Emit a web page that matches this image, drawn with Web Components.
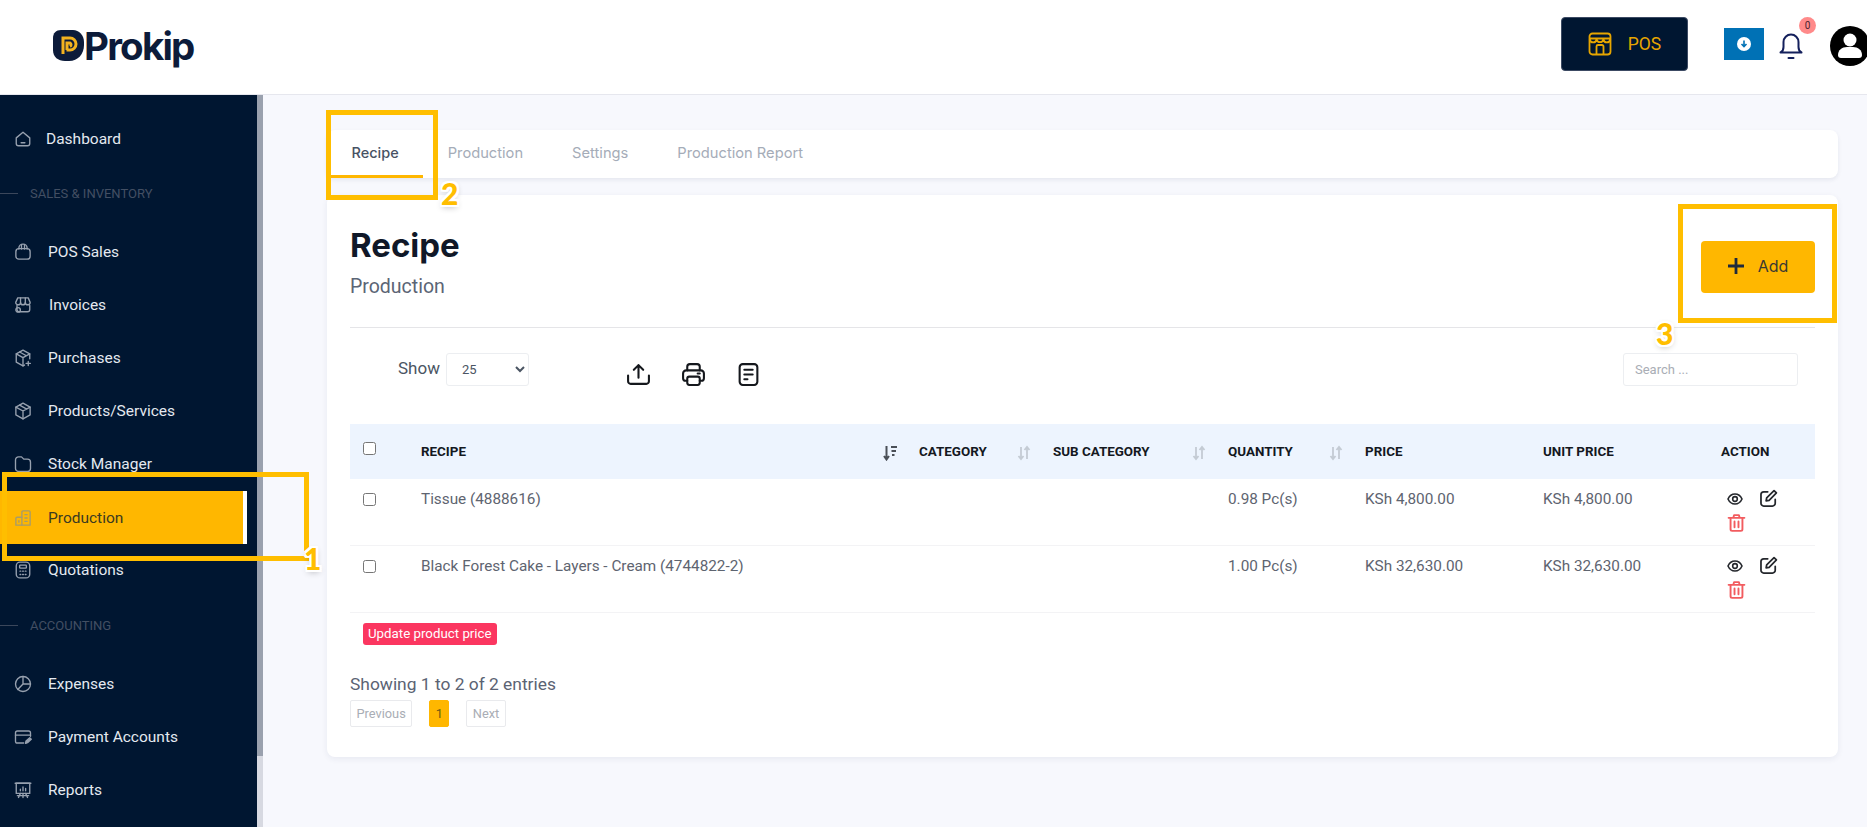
<!DOCTYPE html>
<html>
<head>
<meta charset="utf-8">
<title>Prokip - Recipe</title>
<style>
  html, body { margin: 0; padding: 0; height: 100%; overflow: hidden; }
  body { font-family: Roboto, "Liberation Sans", sans-serif; background: #f7f8fd; }
  #page { position: relative; display: flex; flex-direction: column; width: 1867px; height: 827px; overflow: hidden; }
  #under { display: flex; flex: 1; min-height: 0; }
</style>
</head>
<body>
<div id="page">
  <app-header></app-header>
  <div id="under">
    <side-bar>
      <nav-item icon="home" style="--gap:14px">Dashboard</nav-item>
      <nav-section>SALES &amp; INVENTORY</nav-section>
      <nav-item icon="bag">POS Sales</nav-item>
      <nav-item icon="store" style="--gap:17px">Invoices</nav-item>
      <nav-item icon="boxplus">Purchases</nav-item>
      <nav-item icon="cube">Products/Services</nav-item>
      <nav-item icon="folder">Stock Manager</nav-item>
      <nav-item icon="building" active>Production</nav-item>
      <nav-item icon="calc">Quotations</nav-item>
      <nav-section style="height:61px">ACCOUNTING</nav-section>
      <nav-item icon="pie">Expenses</nav-item>
      <nav-item icon="card">Payment Accounts</nav-item>
      <nav-item icon="board">Reports</nav-item>
    </side-bar>
    <main-area>
      <tab-bar>
        <tab-link active>Recipe</tab-link>
        <tab-link>Production</tab-link>
        <tab-link>Settings</tab-link>
        <tab-link>Production Report</tab-link>
      </tab-bar>
      <recipe-card></recipe-card>
    </main-area>
  </div>
  <note-box n="1" style="left:2px;top:472px;width:307px;height:89px;--nx:297px;--ny:66px"></note-box>
  <note-box n="2" style="left:326px;top:110px;width:112px;height:90px;--nx:110px;--ny:63px"></note-box>
  <note-box n="3" style="left:1678px;top:204px;width:159px;height:119px;--nx:-27px;--ny:109px"></note-box>
</div>

<script>
'use strict';

// sidebar icons, all on a 24 box
const NAV_ICONS = {
  home: '<path d="M3 10.500 12 3l9 7.500V18a3 3 0 0 1-3 3H6a3 3 0 0 1-3-3z"/><path d="M9.500 17h5"/>',
  bag: '<rect x="2.500" y="7.500" width="19" height="14" rx="4"/><path d="M6.500 8V7a5.500 5.500 0 0 1 11 0v1"/><path d="M10 3v5M14 3v5"/>',
  store: '<path d="M5 2.500h14l2.500 6a3.200 3.200 0 0 1-6.400 0 3.200 3.200 0 0 1-6.400 0 3.200 3.200 0 0 1-6.400 0z"/><path d="M8.700 2.500v6M15.100 2.500v6"/><path d="M4 12.500v5.500A3 3 0 0 0 7 21h11a3 3 0 0 0 3-3v-5.500"/><circle cx="5.500" cy="18.500" r="3"/>',
  boxplus: '<path d="M12 1.500 21 6.500v6.500M12 1.500 3 6.500v11l9 5 2-1.100"/><path d="M3 6.500l9 5 9-5M12 11.500v11M7.500 4l9 5"/><path d="M19 16.500v5.500M16.200 19.200h5.600"/>',
  cube: '<path d="M12 1.500 21.500 6.800v10.400L12 22.500l-9.500-5.300V6.800z"/><path d="M2.500 6.800 12 12l9.500-5.200M12 12v10.500M7.500 4.200l9.500 5.300"/>',
  folder: '<path d="M2 6.500A4 4 0 0 1 6 2.500h4l3 3h5a4 4 0 0 1 4 4v8.500a4 4 0 0 1-4 4H6a4 4 0 0 1-4-4z"/>',
  building: '<path d="M10.500 21.500V4a1.500 1.500 0 0 1 1.500-1.500h8A1.500 1.500 0 0 1 21.500 4v17.500z"/><path d="M10.500 11H4a1.500 1.500 0 0 0-1.500 1.500v9h8"/><path d="M14.500 7.500h3M14.500 12h3M14.500 16.500h3M6.500 15.500v2"/>',
  calc: '<rect x="3" y="1.500" width="18" height="21" rx="5"/><rect x="7.500" y="5.500" width="9" height="4" rx="1"/><path d="M8 13.500h1M15 13.500h1M8 18h1M15 18h1M11.500 13.500h1M11.500 18h1"/>',
  pie: '<circle cx="12" cy="12" r="10"/><path d="M12 2v10h10M12 12l-7 7.300"/>',
  card: '<path d="M22 11V6.500A2.500 2.500 0 0 0 19.500 4h-15A2.500 2.500 0 0 0 2 6.500v11A2.500 2.500 0 0 0 4.500 20H13"/><path d="M2 9.500h20"/><path d="m15.500 20.500.5-3 5-4.500 2 2-5 4.500z" fill="currentColor"/>',
  board: '<rect x="3" y="3" width="18" height="13.500"/><path d="M1.500 3h21M8.500 13v-2M12 13V8M15.500 13v-3M8.500 16.500 6 22M15.500 16.500 18 22M12 16.500V22M4.500 19.500h15"/>'
};

class AppHeader extends HTMLElement {
  constructor() {
    super();
    this.attachShadow({mode: 'open'}).innerHTML = `
    <style>
      :host { display: flex; align-items: center; height: 94px; flex: none; background: #fff; border-bottom: 1px solid #e6e7ee; position: relative; }
      .logo { display: flex; align-items: center; margin-left: 53px; margin-top: -2px; }
      .word { font: 700 38.500px/40px Inter, sans-serif; letter-spacing: -1.800px; color: #0c1b3a; margin-top: -1px; }
      .right { margin-left: auto; display: flex; align-items: center; }
      .pos { display: flex; align-items: center; justify-content: center; gap: 16px; width: 127px; height: 54px; box-sizing: border-box; background: #001631; border: 1px solid #3c4a63; border-radius: 4px; color: #e7a600; font: 400 17.500px Roboto, sans-serif; margin-right: 36px; margin-top: -6px; }
      .dl { display: flex; align-items: center; justify-content: center; width: 40px; height: 32px; background: #0071b5; margin-right: 15px; margin-top: -6px; }
      .bell { position: relative; width: 24px; height: 28px; margin-right: 27px; margin-top: -3px; }
      .badge { position: absolute; left: 20px; top: -15px; width: 17px; height: 17px; border-radius: 50%; background: #ff8a8a; color: #4a2530; font: 400 10px/17px Roboto, sans-serif; text-align: center; }
      .avatar { display: block; width: 38px; height: 40px; margin-right: -1px; margin-top: -3px; }
    </style>
    <div class="logo">
      <svg width="31" height="32" viewBox="0 0 31 32"><path d="M8 0h12c6 0 11 5 11 12v3c0 9-6 16-15 16H12C5 31 0 27 0 20V8c0-5 3-8 8-8z" fill="#0c1b3a"/><path d="M10 24V8h7a6 6 0 0 1 0 12h-3.500M14 20v-7h3a2 2 0 0 1 0 3.500" fill="none" stroke="#f2b21f" stroke-width="3"/></svg>
      <span class="word">Prokip</span>
    </div>
    <div class="right">
      <div class="pos">
        <svg width="24" height="24" viewBox="0 0 24 24" fill="none" stroke="#e7a600" stroke-width="1.800" stroke-linejoin="round"><rect x="1.500" y="1.500" width="21" height="21" rx="3"/><path d="M1.500 6.500h21M1.700 7.500a3.500 3.500 0 0 0 6.900 0 3.500 3.500 0 0 0 6.800 0 3.500 3.500 0 0 0 6.900 0"/><path d="M8.500 22v-7.500a1.500 1.500 0 0 1 1.500-1.500h4a1.500 1.500 0 0 1 1.500 1.500V22"/></svg>
        <span>POS</span>
      </div>
      <div class="dl"><svg width="14" height="14" viewBox="0 0 14 14"><circle cx="7" cy="7" r="7" fill="#fff"/><path d="M7 3.500v6M4.500 7 7 9.500 9.500 7" fill="none" stroke="#0071b5" stroke-width="1.600"/></svg></div>
      <div class="bell">
        <svg width="24" height="28" viewBox="0 0 24 28" fill="none" stroke="#14205c" stroke-width="2" stroke-linecap="round" stroke-linejoin="round"><path d="M1.500 20.500c2-1 3-3 3-5.500V10a7.500 7.500 0 0 1 15 0v5c0 2.500 1 4.500 3 5.500z"/><path d="M9.500 26h5"/></svg>
        <span class="badge">0</span>
      </div>
      <svg class="avatar" viewBox="0 0 38 40"><circle cx="20" cy="20" r="20" fill="#000"/><circle cx="20" cy="14" r="6.500" fill="#fff"/><path d="M8 29c0-5 4-8 9-8h6c5 0 9 3 9 8 0 2-1 3-3 3H11c-2 0-3-1-3-3z" fill="#fff"/></svg>
    </div>`;
  }
}

class SideBar extends HTMLElement {
  constructor() {
    super();
    this.attachShadow({mode: 'open'}).innerHTML = `
    <style>
      :host { display: flex; flex: none; width: 263px; }
      .list { width: 257px; background: #001631; padding-top: 17px; box-sizing: border-box; display: flex; flex-direction: column; }
      .track { width: 6px; background: #d7d9e1; }
      .thumb { height: 661px; background: #9aa1ae; }
    </style>
    <div class="list"><slot></slot></div>
    <div class="track"><div class="thumb"></div></div>`;
  }
}

class NavItem extends HTMLElement {
  constructor() {
    super();
    this.attachShadow({mode: 'open'}).innerHTML = `
    <style>
      :host { display: block; height: 53px; color: #e4e9f0; font: 400 15.500px Roboto, sans-serif; }
      .row { display: flex; align-items: center; height: 53px; padding-left: 14px; box-sizing: border-box; gap: var(--gap, 16px); }
      svg { width: 18px; height: 18px; flex: none; color: #97a1af; }
      :host([active]) .row { margin-top: 1px; width: 247px; background: #ffb700; border-right: 4px solid #fff; color: #3b3a20; }
      :host([active]) svg { color: #a79c6b; }
    </style>
    <div class="row">
      <svg viewBox="0 0 24 24" fill="none" stroke="currentColor" stroke-width="1.800" stroke-linecap="round" stroke-linejoin="round">${NAV_ICONS[this.getAttribute('icon')] || ''}</svg>
      <span><slot></slot></span>
    </div>`;
  }
}

class NavSection extends HTMLElement {
  constructor() {
    super();
    this.attachShadow({mode: 'open'}).innerHTML = `
    <style>
      :host { display: flex; align-items: center; height: 60px; box-sizing: border-box; padding-bottom: 3px; gap: 12px; color: #434f63; font: 400 13px Roboto, sans-serif; }
      i { display: block; width: 18px; height: 1px; background: #3b475b; }
    </style>
    <i></i><span><slot></slot></span>`;
  }
}

class MainArea extends HTMLElement {
  constructor() {
    super();
    this.attachShadow({mode: 'open'}).innerHTML = `
    <style>
      :host { display: flex; flex-direction: column; flex: 1; min-width: 0; gap: 17px; padding: 35px 29px 0 64px; background: #f7f8fd; }
    </style>
    <slot></slot>`;
  }
}

class TabBar extends HTMLElement {
  constructor() {
    super();
    this.attachShadow({mode: 'open'}).innerHTML = `
    <style>
      :host { display: flex; height: 48px; background: #fff; border-radius: 8px; box-shadow: 0 2px 4px rgba(30,40,80,.08); }
    </style>
    <slot></slot>`;
  }
}

class TabLink extends HTMLElement {
  constructor() {
    super();
    this.attachShadow({mode: 'open'}).innerHTML = `
    <style>
      :host { display: flex; align-items: center; position: relative; padding: 0 24.500px 3px; height: 48px; box-sizing: border-box; color: #a5acb8; font: 400 14.700px Inter, sans-serif; }
      :host([active]) { color: #475264; font-weight: 500; font-size: 14.500px; }
      :host([active])::after { content: ""; position: absolute; left: 4px; right: 0; bottom: 0; height: 3px; background: #ffb700; }
    </style>
    <slot></slot>`;
  }
}

class RecipeCard extends HTMLElement {
  constructor() {
    super();
    this.attachShadow({mode: 'open'}).innerHTML = `
    <style>
      :host { display: block; height: 562px; box-sizing: border-box; background: #fff; border-radius: 8px; padding: 0 23px; box-shadow: 0 2px 6px rgba(30,40,80,.07); }
      .head { display: flex; justify-content: space-between; align-items: flex-start; height: 133px; box-sizing: border-box; padding-top: 30px; border-bottom: 1px solid #e5e5e8; }
      h1 { margin: 0; font: 700 33px/40px Inter, sans-serif; color: #101828; }
      .sub { font: 400 19.500px/24px Roboto, sans-serif; color: #5b6575; margin-top: 10px; }
      .add { display: flex; align-items: center; justify-content: center; gap: 14px; width: 114px; height: 52px; margin-top: 16px; background: #ffb700; border-radius: 4px; color: #3a3a32; font: 400 16px Inter, sans-serif; padding-bottom: 2px; box-sizing: border-box; margin-left: 1px; }
      .tools { display: flex; align-items: flex-start; height: 96px; box-sizing: border-box; padding: 25px 17px 0 48px; }
      .show { font: 400 17px/31px Roboto, sans-serif; color: #4b5563; margin-right: 6px; }
      select { width: 83px; height: 33px; box-sizing: border-box; background: #fff; border: 1px solid #eceef1; border-radius: 3px; padding-left: 11px; font: 400 13px Roboto, sans-serif; color: #4b5563; }
      .export { display: flex; margin-left: 97px; margin-top: 9px; gap: 30px; align-items: center; }
      .search { margin-left: auto; width: 175px; height: 33px; box-sizing: border-box; border: 1px solid #eceef1; border-radius: 3px; padding: 0 11px; font: 400 13px Roboto, sans-serif; outline: none; }
      .search::placeholder { color: #a9adb5; }
      .pill { display: inline-block; margin: 10px 0 0 13px; height: 22px; padding: 0 5px; background: #fb3660; color: #fff; border-radius: 3px; font: 400 13.300px/21px Roboto, sans-serif; }
      .info { font: 400 17.400px/22px Roboto, sans-serif; color: #5b6373; margin-top: 28px; }
      .pages { display: flex; gap: 17px; margin-top: 5px; }
      .pages span { display: block; height: 27px; box-sizing: border-box; border: 1px solid #e9eaed; border-radius: 2px; padding: 0 5.500px; font: 400 12.800px/25px Roboto, sans-serif; color: #a9adb5; }
      .pages .on { background: #ffb700; border-color: #ffb700; color: #6d5a10; width: 20px; padding: 0; text-align: center; }
    </style>
    <div class="head">
      <div><h1>Recipe</h1><div class="sub">Production</div></div>
      <div class="add">
        <svg width="16" height="16" viewBox="0 0 16 16" fill="none" stroke="#1f2a3c" stroke-width="2.800"><path d="M8 0v16M0 8h16"/></svg>
        <span>Add</span>
      </div>
    </div>
    <div class="tools">
      <span class="show">Show</span>
      <select><option>25</option></select>
      <div class="export">
        <svg width="25" height="25" viewBox="0 0 24 24" fill="none" stroke="#15181d" stroke-width="2" stroke-linecap="round" stroke-linejoin="round"><path d="M12 15V3M7.500 7.500 12 3l4.500 4.500"/><path d="M2 13v5.500A2.500 2.500 0 0 0 4.500 21h15a2.500 2.500 0 0 0 2.500-2.500V13"/></svg>
        <svg width="25" height="25" viewBox="0 0 24 24" fill="none" stroke="#15181d" stroke-width="2" stroke-linecap="round" stroke-linejoin="round"><path d="M6 8V4.500A2.500 2.500 0 0 1 8.500 2h7A2.500 2.500 0 0 1 18 4.500V8"/><path d="M6 18H4.500A2.500 2.500 0 0 1 2 15.500V11a3 3 0 0 1 3-3h14a3 3 0 0 1 3 3v4.500a2.500 2.500 0 0 1-2.500 2.500H18"/><rect x="6" y="14" width="12" height="8" rx="2"/><path d="M16 11h2"/></svg>
        <svg width="25" height="25" viewBox="0 0 24 24" fill="none" stroke="#15181d" stroke-width="2" stroke-linecap="round" stroke-linejoin="round"><rect x="3.500" y="2" width="17" height="20" rx="3"/><path d="M8 7.500h8M8 12h8M8 16.500h3"/></svg>
      </div>
      <input class="search" placeholder="Search ...">
    </div>
    <recipe-table></recipe-table>
    <span class="pill">Update product price</span>
    <div class="info">Showing 1 to 2 of 2 entries</div>
    <div class="pages"><span>Previous</span><span class="on">1</span><span>Next</span></div>`;
  }
}

// sort arrows in the table header; sorted=true for the column currently sorted
function sortIcon(sorted) {
  if (sorted) {
    return '<svg width="14" height="16" viewBox="0 0 14 16" fill="none" stroke="#4a4f57" stroke-width="2"><path d="M3.500 1v13M1 11l2.500 3.500L6 11"/><path d="M8 2h6M8.500 6h4.500M9 10h2.500"/></svg>';
  }
  return '<svg width="14" height="16" viewBox="0 0 14 16" fill="none" stroke="#c4cbd4" stroke-width="1.800"><path d="M4 2v12M1.500 11 4 14l2.500-3"/><path d="M10 14V2M7.500 5 10 2l2.500 3"/></svg>';
}

const ROW_ACTIONS = `
  <div class="acts">
    <svg width="16" height="16" viewBox="0 0 24 24" fill="none" stroke="#24272c" stroke-width="2.400"><path d="M1.500 12C4 6.500 7.500 4.500 12 4.500s8 2 10.500 7.500c-2.500 5.500-6 7.500-10.500 7.500S4 17.500 1.500 12z"/><circle cx="12" cy="12" r="3.500"/></svg>
    <svg width="19" height="19" viewBox="0 0 24 24" fill="none" stroke="#24272c" stroke-width="2.200" stroke-linecap="round" stroke-linejoin="round"><path d="M11 3.500H6A3.500 3.500 0 0 0 2.500 7v11A3.500 3.500 0 0 0 6 21.500h11a3.500 3.500 0 0 0 3.500-3.500v-5"/><path d="M9 15l.7-3.800L19 2l3 3-9.200 9.300z"/></svg>
    <svg width="19" height="20" viewBox="0 0 24 24" fill="none" stroke="#f25c5f" stroke-width="2.400" stroke-linecap="round" stroke-linejoin="round"><path d="M2 5.500h20M8 5.500 9 2h6l1 3.500M4.500 5.500V20a2 2 0 0 0 2 2h11a2 2 0 0 0 2-2V5.500M9.500 10v7.500M14.500 10v7.500"/></svg>
  </div>`;

class RecipeTable extends HTMLElement {
  constructor() {
    super();
    const rows = [
      ['Tissue (4888616)', '', '', '0.98 Pc(s)', 'KSh 4,800.00', 'KSh 4,800.00'],
      ['Black Forest Cake - Layers - Cream (4744822-2)', '', '', '1.00 Pc(s)', 'KSh 32,630.00', 'KSh 32,630.00']
    ];
    const body = rows.map((r) => `<tr><td><input type="checkbox"></td>${r.map((c) => `<td>${c}</td>`).join('')}<td class="act">${ROW_ACTIONS}</td></tr>`).join('');
    this.attachShadow({mode: 'open'}).innerHTML = `
    <style>
      :host { display: block; }
      table { width: 1465px; table-layout: fixed; border-collapse: collapse; font: 400 15.300px/20px Roboto, sans-serif; color: #5e6470; }
      th { height: 55px; padding: 0 8px 0 14px; background: #edf4fe; text-align: left; font: 700 13.400px/16px Roboto, sans-serif; color: #14181f; box-sizing: border-box; }
      th > div { display: flex; justify-content: space-between; align-items: center; }
      th svg { margin-top: 3px; }
      td { padding: 10px 0 0 14px; vertical-align: top; height: 56px; border-bottom: 1px solid #f3f3f5; }
      input { display: block; margin: 4px 0 0 -1px; width: 13px; height: 13px; }
      th input { margin-top: -6px; }
      td.act { padding-left: 20px; }
      .acts { display: flex; flex-wrap: wrap; gap: 5px 16px; width: 60px; align-items: center; }
    </style>
    <table>
      <colgroup><col style="width:57px"><col style="width:498px"><col style="width:134px"><col style="width:175px"><col style="width:137px"><col style="width:178px"><col style="width:178px"><col style="width:108px"></colgroup>
      <thead><tr>
        <th><input type="checkbox"></th>
        <th><div>RECIPE ${sortIcon(true)}</div></th>
        <th><div>CATEGORY ${sortIcon()}</div></th>
        <th><div>SUB CATEGORY ${sortIcon()}</div></th>
        <th><div>QUANTITY ${sortIcon()}</div></th>
        <th>PRICE</th><th>UNIT PRICE</th><th>ACTION</th>
      </tr></thead>
      <tbody>${body}</tbody>
    </table>`;
  }
}

// yellow tutorial frame with its number, sits over the screenshot
class NoteBox extends HTMLElement {
  constructor() {
    super();
    this.attachShadow({mode: 'open'}).innerHTML = `
    <style>
      :host { display: block; position: absolute; box-sizing: border-box; border: 5px solid #ffbe00; }
      span { position: absolute; left: var(--nx); top: var(--ny); font: 900 30px/30px Lato, sans-serif; color: #ffbe00; text-shadow: 2px 0 #fff, -2px 0 #fff, 0 2px #fff, 0 -2px #fff, 2px 2px #fff, -2px 2px #fff, 2px -2px #fff, -2px -2px #fff, 0 2px 6px rgba(0,0,0,.3); }
    </style>
    <span>${this.getAttribute('n')}</span>`;
  }
}

customElements.define('app-header', AppHeader);
customElements.define('side-bar', SideBar);
customElements.define('nav-item', NavItem);
customElements.define('nav-section', NavSection);
customElements.define('main-area', MainArea);
customElements.define('tab-bar', TabBar);
customElements.define('tab-link', TabLink);
customElements.define('recipe-card', RecipeCard);
customElements.define('recipe-table', RecipeTable);
customElements.define('note-box', NoteBox);
</script>
</body>
</html>
